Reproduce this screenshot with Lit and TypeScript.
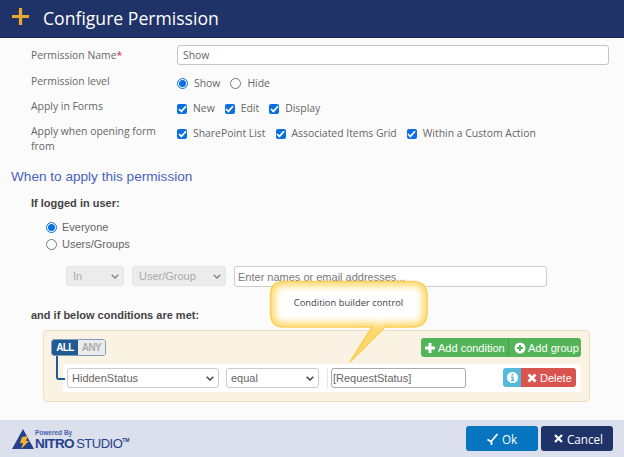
import { LitElement, html, css, svg } from "lit";
import { customElement } from "lit/decorators.js";

const chevron = svg`<svg class="chev" width="8" height="5" viewBox="0 0 8 5"><path d="M.7.7L4 4l3.300-3.300" fill="none" stroke="currentColor" stroke-width="1.500"/></svg>`;
const check = svg`<svg width="9" height="8" viewBox="0 0 9 8"><path d="M1 4l2.400 2.400L8 1.200" fill="none" stroke="#fff" stroke-width="1.700"/></svg>`;
const bubble = "M16 2.500H144Q159 2.500 159 16V34Q159 48 144 48H117L82 83L104 48H16Q2.500 48 2.500 34V16Q2.500 2.500 16 2.500Z";

@customElement("app-root")
export class AppRoot extends LitElement {
  static styles = css`
    :host { display: block; width: 624px; height: 457px; position: relative; overflow: hidden; background: #fbfbfb; font-family: "Liberation Sans", Arial, sans-serif; color: #555; font-size: 11px; }
    * { box-sizing: border-box; }
    .page { display: flex; flex-direction: column; height: 457px; }
    .header { height: 38px; flex: none; background: #1f3368; border-bottom: 1px solid #15264f; display: flex; align-items: center; padding: 0 0 2px 12px; gap: 14px; color: #fff; font: 17.6px "Open Sans", sans-serif; }
    .plus { margin-bottom: 3px; }
    .main { flex: 1; min-height: 0; }
    .form { padding: 7px 15px 0 31px; font: 10.4px/15px "Open Sans", sans-serif; color: #666; display: grid; grid-template-columns: 146px 1fr; align-items: start; }
    .r1 { height: 26px; padding-top: 3px; }
    .r2, .r3 { height: 25px; padding-top: 3px; }
    .r4 { height: 48px; padding-top: 3px; }
    .opts { display: flex; align-items: center; margin-top: 5px; height: 15px; }
    .req { color: #e0304a; }
    .text { height: 20px; background: #fff; border: 1px solid #c4c4c4; border-radius: 3px; padding: 0 5px; display: flex; align-items: center; color: #666; }
    .opt { display: flex; align-items: center; gap: 6px; margin-right: 10px; white-space: nowrap; }
    .radio { width: 11px; height: 11px; border-radius: 50%; border: 1px solid #777; background: #fff; flex: none; display: flex; align-items: center; justify-content: center; }
    .radio.on { border-color: #0a6fe0; }
    .radio.on::after { content: ""; width: 7px; height: 7px; border-radius: 50%; background: #0a6fe0; }
    .box { width: 10px; height: 10px; border-radius: 2px; background: #0a6fe0; flex: none; display: flex; align-items: center; justify-content: center; }
    h2 { margin: 0; padding: 0 0 0 11px; font: 400 13.6px/16px "Liberation Sans", sans-serif; color: #4863bd; }
    .user { padding: 0 31px; }
    .bold { font-weight: 700; font-size: 11px; line-height: 14px; color: #444; }
    .logged { padding-top: 11px; height: 25px; }
    .aud { padding: 10px 0 0 15px; display: flex; flex-direction: column; gap: 3px; }
    .aud .opt { line-height: 14px; color: #666; gap: 5px; }
    .who { display: flex; gap: 8px; padding: 15px 0 0 35px; align-items: flex-start; }
    .sel { height: 20px; border: 1px solid #ccc; border-radius: 3px; background: #fff; display: flex; align-items: center; justify-content: space-between; padding: 0 4px; color: #666; flex: none; }
    .sel .chev { color: #444; }
    .sel.off { background: #ececec; color: #aaa; border-color: #e4e4e4; padding: 0 4px 0 6px; }
    .sel.off .chev { color: #888; }
    .w-in { width: 58px; }
    .w-user { width: 94px; }
    .w-field { width: 152px; }
    .w-op { width: 93px; margin-left: 7px; }
    .names { width: 313px; height: 21px; border: 1px solid #ccc; background: #fff; border-radius: 3px; padding: 0 3px; display: flex; align-items: center; color: #777; white-space: nowrap; overflow: hidden; }
    .cond { padding-top: 21px; }
    .builder { margin: 8px 0 0 43px; width: 547px; height: 72px; background: #faf3e3; border: 1px solid #eadfbf; border-radius: 4px; padding: 7px 7px 0 7px; }
    .b-top { display: flex; justify-content: space-between; align-items: flex-start; }
    .allany { display: flex; height: 17px; margin-top: 1px; border: 1px solid #7f9fbd; border-radius: 3px; overflow: hidden; font-size: 10px; font-weight: 700; line-height: 15px; text-align: center; letter-spacing: -0.6px; }
    .allany .a { background: #1f5a93; color: #fff; width: 26px; }
    .allany .b { background: #ececec; color: #aaa; width: 27px; }
    .bg { display: flex; height: 19px; border-radius: 3px; overflow: hidden; color: #fff; margin-right: 1px; }
    .btn { display: flex; align-items: center; background: #53b458; }
    .btn1 { width: 87px; padding-left: 4px; gap: 3px; }
    .btn2 { width: 73px; padding-left: 5px; gap: 2px; border-left: 1px solid #45a049; }
    .rule-wrap { position: relative; padding: 7px 1px 0 12px; }
    .rule { height: 28px; background: #fff; border-radius: 3px; display: flex; align-items: center; padding-left: 4px; }
    .sep { width: 1px; height: 20px; background: #e5e5e5; margin: 0 3px 0 8px; }
    .val { width: 135px; height: 20px; border: 1px solid #aaa; background: #fff; border-radius: 3px; padding: 0 1px; color: #666; display: flex; align-items: center; }
    .rbtns { display: flex; margin: -1px 0 0 37px; height: 19px; border-radius: 3px; overflow: hidden; color: #fff; }
    .inf { width: 18px; background: #55b9dc; display: flex; align-items: center; justify-content: center; }
    .del { width: 55px; background: #d9534f; display: flex; align-items: center; padding-left: 6px; gap: 3px; }
    .line { position: absolute; left: 5px; top: -1px; width: 9px; height: 24px; border-left: 2px solid #1f5a93; border-bottom: 2px solid #1f5a93; border-bottom-left-radius: 3px; }
    .footer { height: 37px; flex: none; background: #dbe0ec; display: flex; align-items: center; justify-content: space-between; padding: 0 11px; }
    .logo { display: flex; align-items: flex-end; color: #2a4590; margin-top: 2px; }
    .logotext { display: flex; flex-direction: column; margin-left: 1px; }
    .pw { font: 700 6.5px/8px "Liberation Sans", sans-serif; color: #4a62a8; }
    .ns { font: 700 13.5px/13px "Liberation Sans", sans-serif; letter-spacing: -0.6px; white-space: nowrap; color: #25408c; }
    .ns span { font-weight: 400; font-size: 13px; letter-spacing: -0.5px; margin-left: -1px; }
    .ns sup { font-size: 5px; line-height: 0; vertical-align: 6px; font-weight: 700; letter-spacing: 0; }
    .actions { display: flex; gap: 3px; }
    .act { width: 72px; height: 25px; border-radius: 3px; color: #fff; display: flex; align-items: center; justify-content: center; gap: 4px; font: 11.7px "Open Sans", sans-serif; }
    .ok { background: #0875c1; }
    .cancel { background: #1f3368; padding-left: 3px; }
    .callout { position: absolute; left: 268px; top: 279px; pointer-events: none; }
    .ctext { position: absolute; left: 270px; top: 296px; width: 157px; text-align: center; font: 9.4px/14px "Open Sans", sans-serif; color: #444; }
  `;

  private box(t: string) {
    return html`<span class="opt"><span class="box">${check}</span>${t}</span>`;
  }

  render() {
    return html`
      <div class="page">
        <div class="header">
          <svg class="plus" width="17" height="17" viewBox="0 0 17 17"><path d="M8.500 0v17M0 8.500h17" stroke="#eda82b" stroke-width="3.200"/></svg>
          Configure Permission
        </div>
        <div class="main">
          <div class="form">
            <div class="r1">Permission Name<span class="req">*</span></div>
            <div class="text">Show</div>
            <div class="r2">Permission level</div>
            <div class="opts"><span class="opt"><span class="radio on"></span>Show</span><span class="opt"><span class="radio"></span>Hide</span></div>
            <div class="r3">Apply in Forms</div>
            <div class="opts">${this.box("New")}${this.box("Edit")}${this.box("Display")}</div>
            <div class="r4">Apply when opening form<br />from</div>
            <div class="opts">${this.box("SharePoint List")}${this.box("Associated Items Grid")}${this.box("Within a Custom Action")}</div>
          </div>
          <h2>When to apply this permission</h2>
          <div class="user">
            <div class="bold logged">If logged in user:</div>
            <div class="aud">
              <span class="opt"><span class="radio on"></span>Everyone</span>
              <span class="opt"><span class="radio"></span>Users/Groups</span>
            </div>
            <div class="who">
              <div class="sel off w-in">In ${chevron}</div>
              <div class="sel off w-user">User/Group ${chevron}</div>
              <div class="names">Enter names or email addresses...</div>
            </div>
            <div class="bold cond">and if below conditions are met:</div>
          </div>
          <div class="builder">
            <div class="b-top">
              <div class="allany"><span class="a">ALL</span><span class="b">ANY</span></div>
              <div class="bg">
                <span class="btn btn1"><svg width="10" height="10" viewBox="0 0 10 10"><path d="M5 0v10M0 5h10" stroke="#fff" stroke-width="3"/></svg>Add condition</span>
                <span class="btn btn2"><svg width="12" height="12" viewBox="0 0 12 12"><circle cx="6" cy="6" r="5.500" fill="#fff"/><path d="M6 3v6M3 6h6" stroke="#53b458" stroke-width="2"/></svg>Add group</span>
              </div>
            </div>
            <div class="rule-wrap">
              <div class="line"></div>
              <div class="rule">
                <div class="sel w-field">HiddenStatus ${chevron}</div>
                <div class="sel w-op">equal ${chevron}</div>
                <div class="sep"></div>
                <div class="val">[RequestStatus]</div>
                <div class="rbtns">
                  <span class="inf"><svg width="11" height="11" viewBox="0 0 11 11"><circle cx="5.500" cy="5.500" r="5.500" fill="#fff"/><path d="M4.500 2h2v1.600h-2zM4 4.500h2.500v3.200h.8V9H4V7.700h.8V5.700H4z" fill="#55b9dc"/></svg></span>
                  <span class="del"><svg width="10" height="10" viewBox="0 0 10 10"><path d="M1.500 1.500l7 7M8.500 1.500l-7 7" stroke="#fff" stroke-width="2.800"/></svg>Delete</span>
                </div>
              </div>
            </div>
          </div>
        </div>
        <div class="footer">
          <div class="logo">
            <svg width="23" height="21" viewBox="0 0 23 21"><path d="M12 0L23 20H1z" fill="#25408c"/><path d="M17 7l-6 1-2 6h3l-2 6 8-8h-3z" fill="#f2b431"/></svg>
            <div class="logotext"><div class="pw">Powered By</div><div class="ns">NITRO <span>STUDIO</span><sup>TM</sup></div></div>
          </div>
          <div class="actions">
            <div class="act ok"><svg width="11" height="12" viewBox="0 0 11 12"><path d="M.5 6.500l4 2.500M4.500 12V8L10.500 1" fill="none" stroke="#fff" stroke-width="1.700"/></svg>Ok</div>
            <div class="act cancel"><svg width="9" height="9" viewBox="0 0 9 9"><path d="M1 1l7 7M8 1L1 8" stroke="#fff" stroke-width="2.200"/></svg>Cancel</div>
          </div>
        </div>
      </div>
      <svg class="callout" width="162" height="86" viewBox="0 0 162 86">
        <defs>
          <filter id="b" x="-20%" y="-20%" width="140%" height="140%"><feGaussianBlur stdDeviation="3.500"/></filter>
          <clipPath id="c"><path d=${bubble}/></clipPath>
        </defs>
        <path d=${bubble} fill="#fff"/>
        <g clip-path="url(#c)"><path d=${bubble} fill="none" stroke="#fed868" stroke-width="9" filter="url(#b)"/></g>
        <path d=${bubble} fill="none" stroke="#fbcf55" stroke-width="1.500"/>
      </svg>
      <div class="ctext">Condition builder control</div>
    `;
  }
}
